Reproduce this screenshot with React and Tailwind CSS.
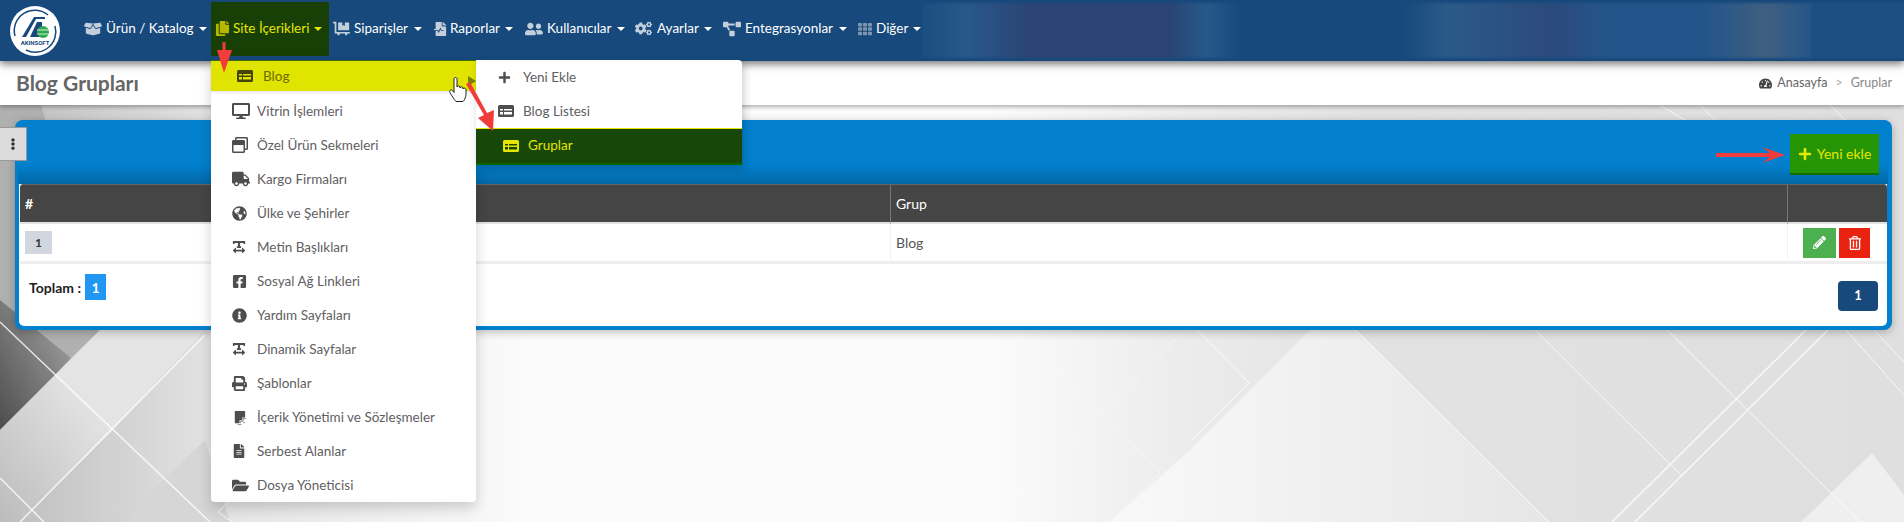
import {
  FaBoxOpen, FaCopy, FaDollyFlatbed, FaFileMedicalAlt, FaUserFriends, FaCogs, FaProjectDiagram, FaTh,
  FaDesktop, FaRegWindowRestore, FaTruck, FaGlobeAmericas, FaTextWidth, FaFacebookSquare, FaInfoCircle,
  FaPrint, FaFileAlt, FaFolderOpen, FaPlus, FaTachometerAlt, FaPencilAlt, FaRegTrashAlt, FaEllipsisV,
} from "react-icons/fa";

const navItems = [
  { label: "Ürün / Katalog", icon: FaBoxOpen, width: "w-[132px]", box: "w-[17px]", iconSize: 18 },
  { label: "Site İçerikleri", icon: FaCopy, width: "w-[118px]", box: "w-[12px]", iconSize: 15, active: true },
  { label: "Siparişler", icon: FaDollyFlatbed, width: "w-[100px]", box: "w-[15px]", iconSize: 17 },
  { label: "Raporlar", icon: FaFileMedicalAlt, width: "w-[91px]", box: "w-[11px]", iconSize: 14 },
  { label: "Kullanıcılar", icon: FaUserFriends, width: "w-[110px]", box: "w-[17px]", iconSize: 18 },
  { label: "Ayarlar", icon: FaCogs, width: "w-[88px]", box: "w-[17px]", iconSize: 17 },
  { label: "Entegrasyonlar", icon: FaProjectDiagram, width: "w-[136px]", box: "w-[17px]", iconSize: 18 },
  { label: "Diğer", icon: FaTh, width: "w-[68px]", box: "w-[12px]", iconSize: 14, dim: true },
];

const menuItems = [
  { label: "Vitrin İşlemleri", icon: FaDesktop, size: 18 },
  { label: "Özel Ürün Sekmeleri", icon: FaRegWindowRestore, size: 16 },
  { label: "Kargo Firmaları", icon: FaTruck, size: 18 },
  { label: "Ülke ve Şehirler", icon: FaGlobeAmericas, size: 15 },
  { label: "Metin Başlıkları", icon: FaTextWidth, size: 14 },
  { label: "Sosyal Ağ Linkleri", icon: FaFacebookSquare, size: 15 },
  { label: "Yardım Sayfaları", icon: FaInfoCircle, size: 15 },
  { label: "Dinamik Sayfalar", icon: FaTextWidth, size: 14 },
  { label: "Şablonlar", icon: FaPrint, size: 15 },
  { label: "İçerik Yönetimi ve Sözleşmeler", icon: StepsIcon, size: 15 },
  { label: "Serbest Alanlar", icon: FaFileAlt, size: 14 },
  { label: "Dosya Yöneticisi", icon: FaFolderOpen, size: 17 },
];

function StepsIcon({ size }) {
  return (
    <svg width={size} height={size} viewBox="0 0 16 16">
      <path d="M3 1h11v7h-3v3H8v3H3z" fill="currentColor" />
      <path d="M9 14v-2h3V9h3M6 15.500h4M12 13.500h2" stroke="#8a8a8a" fill="none" />
    </svg>
  );
}

function ListIcon() {
  return (
    <svg width="16" height="12" viewBox="0 0 16 12">
      <path d="M1.500 0h13A1.500 1.500 0 0 1 16 1.500v9a1.500 1.500 0 0 1-1.500 1.500h-13A1.500 1.500 0 0 1 0 10.500v-9A1.500 1.500 0 0 1 1.500 0z" fill="currentColor" />
      <path d="M2 4h3v1.500H2zM6 4h8v1.500H6zM2 7h3v2.500H2zM6 7h8v2.500H6z" fill="var(--cut)" />
    </svg>
  );
}

function Caret({ className }) {
  return <span className={`ml-auto inline-block w-0 h-0 border-x-[4px] border-x-transparent border-t-[4px] ${className}`} />;
}

function Logo() {
  return (
    <svg width="50" height="50" viewBox="0 0 50 50" className="shrink-0">
      <circle cx="25" cy="25" r="25" fill="#fff" />
      <path d="M5 30A20.500 20.500 0 0 1 38 9" fill="none" stroke="#17497c" strokeWidth="1.500" />
      <path d="M45 20A20.500 20.500 0 0 1 16 44" fill="none" stroke="#17497c" strokeWidth="1.500" />
      <path d="M12 31 24 11h11v2h-9L16 31zM20 31l7-15h5v15z" fill="#17497c" />
      <circle cx="33" cy="26" r="6" fill="#2fa84f" />
      <path d="M27 24h12M27 28h12" stroke="#fff" strokeWidth="0.800" />
      <text x="25" y="39" textAnchor="middle" fontSize="6" fontWeight="700" fill="#17497c" fontFamily="Roboto, sans-serif">AKINSOFT</text>
    </svg>
  );
}

function Background() {
  return (
    <svg className="absolute inset-0 w-[1904px] h-[522px]" viewBox="0 0 1904 522">
      <defs>
        <linearGradient id="base" x1="0" x2="1" y1="0" y2="0">
          <stop offset="0" stopColor="#bdbdbd" />
          <stop offset="0.12" stopColor="#e6e6e6" />
          <stop offset="0.28" stopColor="#fbfbfb" />
          <stop offset="0.52" stopColor="#fbfbfb" />
          <stop offset="0.62" stopColor="#ececec" />
          <stop offset="0.72" stopColor="#e2e2e2" />
          <stop offset="1" stopColor="#dfdfdf" />
        </linearGradient>
        <linearGradient id="dark" x1="0" x2="1" y1="1" y2="0">
          <stop offset="0" stopColor="#4d4d4d" />
          <stop offset="1" stopColor="#a8a8a8" />
        </linearGradient>
        <linearGradient id="grey" x1="0" x2="1" y1="1" y2="0">
          <stop offset="0" stopColor="#bcbcbc" />
          <stop offset="1" stopColor="#ececec" />
        </linearGradient>
        <linearGradient id="fade" x1="0" x2="1" y1="0" y2="0">
          <stop offset="0" stopColor="#f9f9f9" />
          <stop offset="1" stopColor="#e6e6e6" />
        </linearGradient>
      </defs>
      <rect width="1904" height="522" fill="url(#base)" />
      <polygon points="0,100 40,100 100,330 71,358 54,376 0,430" fill="#b0b0b0" />
      <polygon points="0,300 71,358 54,376 0,430" fill="url(#dark)" />
      <polygon points="0,430 54,376 110,433 20,522 0,522" fill="url(#grey)" />
      <polygon points="54,376 100,330 205,330 110,433" fill="#e4e4e4" />
      <polygon points="125,522 160,483 205,440 230,522" fill="#d6d6d6" />
      <polygon points="1192,448 1310,330 1356,330 1549,522 1110,522" fill="url(#fade)" />
      <polygon points="1872,453 1904,495 1904,522 1801,522" fill="#efefef" />
      <g stroke="#fff" fill="none" strokeOpacity="0.8">
        <path d="M0 322 210 522M0 478 44 522M20 522 205 335" strokeWidth="1.500" />
        <path d="M218 512 262 470M218 512 232 522" strokeWidth="1" />
        <path d="M1016 330 1160 473 1110 522M1184 330 994 522" strokeWidth="1" strokeOpacity="0.5" />
        <path d="M1197 330 1249 383 1192 440" strokeWidth="1" />
        <path d="M1356 330 1549 522M1535 330 1681 475M1667 330 1860 522M1846 330 1904 395M1874 330 1904 362" strokeWidth="1" />
        <path d="M1806 330 1612 522M1828 330 1635 522" strokeWidth="1.500" />
        <path d="M1660 105 1685 120M1700 105 1715 120M1830 105 1845 120" strokeWidth="1" />
      </g>
    </svg>
  );
}

function NavItem({ item }) {
  const Icon = item.icon;
  let iconColor = "text-[#c3cfdb]";
  if (item.active) iconColor = "text-[#b5b700]";
  if (item.dim) iconColor = "text-[#7f93ab]";
  return (
    <div
      className={`${item.width} h-[54px] shrink-0 relative flex items-center pl-[5px] pr-[7px] gap-[5px] ${
        item.active ? "bg-[#183f06] text-[#e6e600]" : "text-white"
      }`}
    >
      <span className={`${item.box} flex justify-center pb-[1px] ${iconColor}`}>
        <Icon size={item.iconSize} className="shrink-0" />
      </span>
      <span className="text-[13.500px] pb-[2px] whitespace-nowrap">{item.label}</span>
      <Caret className={item.active ? "border-t-[#e6e600]" : "border-t-white"} />
      {item.active && <SiteMenu />}
    </div>
  );
}

function SiteMenu() {
  return (
    <div className="absolute left-0 top-[58px] w-[265px] h-[442px] bg-white rounded-b-[4px] shadow-[0_6px_14px_rgba(0,0,0,0.18)] text-[#5f6062] z-20">
      <div className="h-[31px] mb-[3px] bg-[#e1e400] border-t border-t-[#3f6b06] flex items-center pl-[26px] text-[#6b6b00] relative shadow-[0_2px_2px_rgba(0,0,0,0.08)]">
        <span className="w-[26px] text-[#45450a] [--cut:#e1e400]"><ListIcon /></span>
        <span className="text-[13.500px]">Blog</span>
        <span className="absolute right-0 top-[15px] w-0 h-0 border-y-[5px] border-y-transparent border-l-[8px] border-l-[#7d8000]" />
      </div>
      {menuItems.map((m) => (
        <div key={m.label} className="h-[34px] flex items-center pl-[21px]">
          <span className="w-[25px] flex text-[#4e4e50]"><m.icon size={m.size} /></span>
          <span className="text-[13.500px] whitespace-nowrap">{m.label}</span>
        </div>
      ))}
      <SubMenu />
    </div>
  );
}

function SubMenu() {
  return (
    <div className="absolute left-[265px] top-0 w-[266px] h-[105px] bg-white rounded-tr-[4px] shadow-[2px_4px_8px_rgba(0,0,0,0.2)] flex flex-col text-[13.500px]">
      <div className="h-[34px] flex items-center pl-[22px]">
        <span className="w-[25px] text-[#4e4e50]"><FaPlus size={13} /></span>
        <span>Yeni Ekle</span>
      </div>
      <div className="h-[34px] flex items-center pl-[22px]">
        <span className="w-[25px] text-[#4e4e50] [--cut:#fff]"><ListIcon /></span>
        <span>Blog Listesi</span>
      </div>
      <div className="h-[37px] bg-[#18470a] border-t border-t-[#e6e600] border-b-2 border-b-[#0b6400] flex items-center pl-[27px] text-[#e6e600]">
        <span className="w-[25px] text-[#e6e600] [--cut:#18470a]"><ListIcon /></span>
        <span className="pb-[2px]">Gruplar</span>
      </div>
    </div>
  );
}

// kirmizi oklar ve el imleci ekran goruntusunun uzerinde duruyor
function Annotations() {
  return (
    <svg className="absolute inset-0 w-[1904px] h-[522px] z-30 pointer-events-none" viewBox="0 0 1904 522">
      <g fill="#f23b3b">
        <polygon points="222.500,42 225.500,42 225.500,50 232,50 224,73 217,50 222.500,50" />
        <polygon points="466,84 470,82 487,113 494,110 493,131 478,118 484,115" />
        <polygon points="1716,153 1770,153 1762,147 1785,155 1762,163 1770,157 1716,157" />
      </g>
      <path
        d="M454 79c0-2 3-2 3 0v8c0-1.500 3-1.500 3 0v1c0-1.500 3-1.500 3 0v1c0-1.500 3-1 3 .5v5c0 3-2 6-3 7h-7c-2-2-5-7-6-9-1-2 1-3.500 2.500-2l1.500 2z"
        fill="#fff"
        stroke="#222"
        strokeWidth="1"
      />
    </svg>
  );
}

export default function App() {
  return (
    <div className="relative w-[1904px] h-[522px] overflow-hidden font-['Lato','Liberation_Sans',sans-serif] text-[#555]">
      <Background />
      <Annotations />

      <header className="relative z-20 h-[61px] bg-[#17497c] flex items-start pl-[10px] shadow-[0_3px_8px_rgba(0,0,0,0.55)]">
        <div className="mt-[6px] mr-[19px]"><Logo /></div>
        <nav className="flex items-start mt-[2px]">
          {navItems.map((item) => <NavItem key={item.label} item={item} />)}
        </nav>
        <div className="mt-[3px] flex-1 h-[55px] blur-[1px] bg-[linear-gradient(90deg,#1c4e80,#28588a_5%,#2c4476_12%,#2b4476_28%,#265a8a_32%,#17497c_36%,#17497c_54%,#2b5a88_59%,#2b4a7c_71%,#24558a_77%,#24558a_88%,#3f5f80_95%,#24558a)]" />
        <div className="mt-[3px] w-[92px] h-[55px] bg-[#1d4f82]" />
      </header>

      <div className="relative z-10 h-[44px] bg-white flex items-center justify-between pl-[16px] pr-[12px] shadow-[0_2px_4px_rgba(0,0,0,0.3)]">
        <h1 className="text-[21px] font-bold text-[#666]">Blog Grupları</h1>
        <div className="flex items-center text-[12.500px] text-[#666]">
          <FaTachometerAlt size={13} className="text-[#444] mr-[5px]" />
          <span>Anasayfa</span>
          <span className="mx-[8px] text-[#aaa]">&gt;</span>
          <span className="text-[#888]">Gruplar</span>
        </div>
      </div>

      <div className="absolute left-0 top-[127px] z-10 w-[27px] h-[34px] bg-[#dcdcdc] border border-l-0 border-[#999] flex items-center justify-center text-[#333]">
        <FaEllipsisV size={12} />
      </div>

      <main className="relative ml-[15px] mr-[12px] mt-[15px] h-[210px] rounded-lg bg-[#0380cd] border-l-4 border-r-[5px] border-b-4 border-[#0380cd] flex flex-col shadow-[0_2px_8px_rgba(0,0,0,0.25)]">
        <div className="h-[64px] -mx-[1px] rounded-t-lg bg-[linear-gradient(180deg,#0380cd_70%,#0367a6)] flex justify-end pt-[14px] pr-[9px]">
          <button className="w-[89px] h-[41px] bg-[#259405] border-b-2 border-b-[#146c00] text-[#e8e800] text-[14px] flex items-center justify-center gap-[5px]">
            <FaPlus size={14} />Yeni ekle
          </button>
        </div>
        <div className="flex-1 bg-white rounded-b-[5px] flex flex-col">
          <table className="ml-[1px] w-[1867px] table-fixed border-separate border-spacing-0 text-[14px]">
            <thead>
              <tr className="h-[40px] bg-[#454545] text-white text-left">
                <th className="w-[870px] pl-[5px] rounded-tl-[4px] border-t border-t-[#666] border-b-2 border-b-[#e2e2e2] font-bold">#</th>
                <th className="pl-[5px] border-l border-l-[#777] border-t border-t-[#666] border-b-2 border-b-[#e2e2e2] font-normal">Grup</th>
                <th className="w-[100px] border-l border-l-[#777] rounded-tr-[4px] border-t border-t-[#666] border-b-2 border-b-[#e2e2e2]" />
              </tr>
            </thead>
            <tbody>
              <tr className="h-[40px] text-[#555]">
                <td className="pl-[5px] border-b-[3px] border-b-[#eee]">
                  <span className="w-[27px] h-[23px] bg-[#d2d6de] text-[#333] text-[12px] font-bold flex items-center justify-center">1</span>
                </td>
                <td className="pl-[5px] border-l border-l-[#f2f2f2] border-b-[3px] border-b-[#eee]">Blog</td>
                <td className="pl-[15px] border-l border-l-[#f2f2f2] border-b-[3px] border-b-[#eee]">
                  <div className="flex gap-[3px]">
                    <span className="w-[33px] h-[30px] bg-[#4caf50] text-white flex items-center justify-center"><FaPencilAlt size={13} /></span>
                    <span className="w-[31px] h-[30px] bg-[#e9230f] text-white flex items-center justify-center"><FaRegTrashAlt size={14} /></span>
                  </div>
                </td>
              </tr>
            </tbody>
          </table>
          <div className="flex-1 flex items-start justify-between pl-[10px] pr-[9px] pt-[10px]">
            <div className="flex items-center gap-[4px] text-[14px] font-bold text-[#222]">
              Toplam :
              <span className="w-[21px] h-[26px] bg-[#2196f3] text-white flex items-center justify-center">1</span>
            </div>
            <span className="mt-[7px] w-[40px] h-[30px] rounded-[4px] bg-[#17497c] text-white text-[13px] font-bold flex items-center justify-center">1</span>
          </div>
        </div>
      </main>
    </div>
  );
}
